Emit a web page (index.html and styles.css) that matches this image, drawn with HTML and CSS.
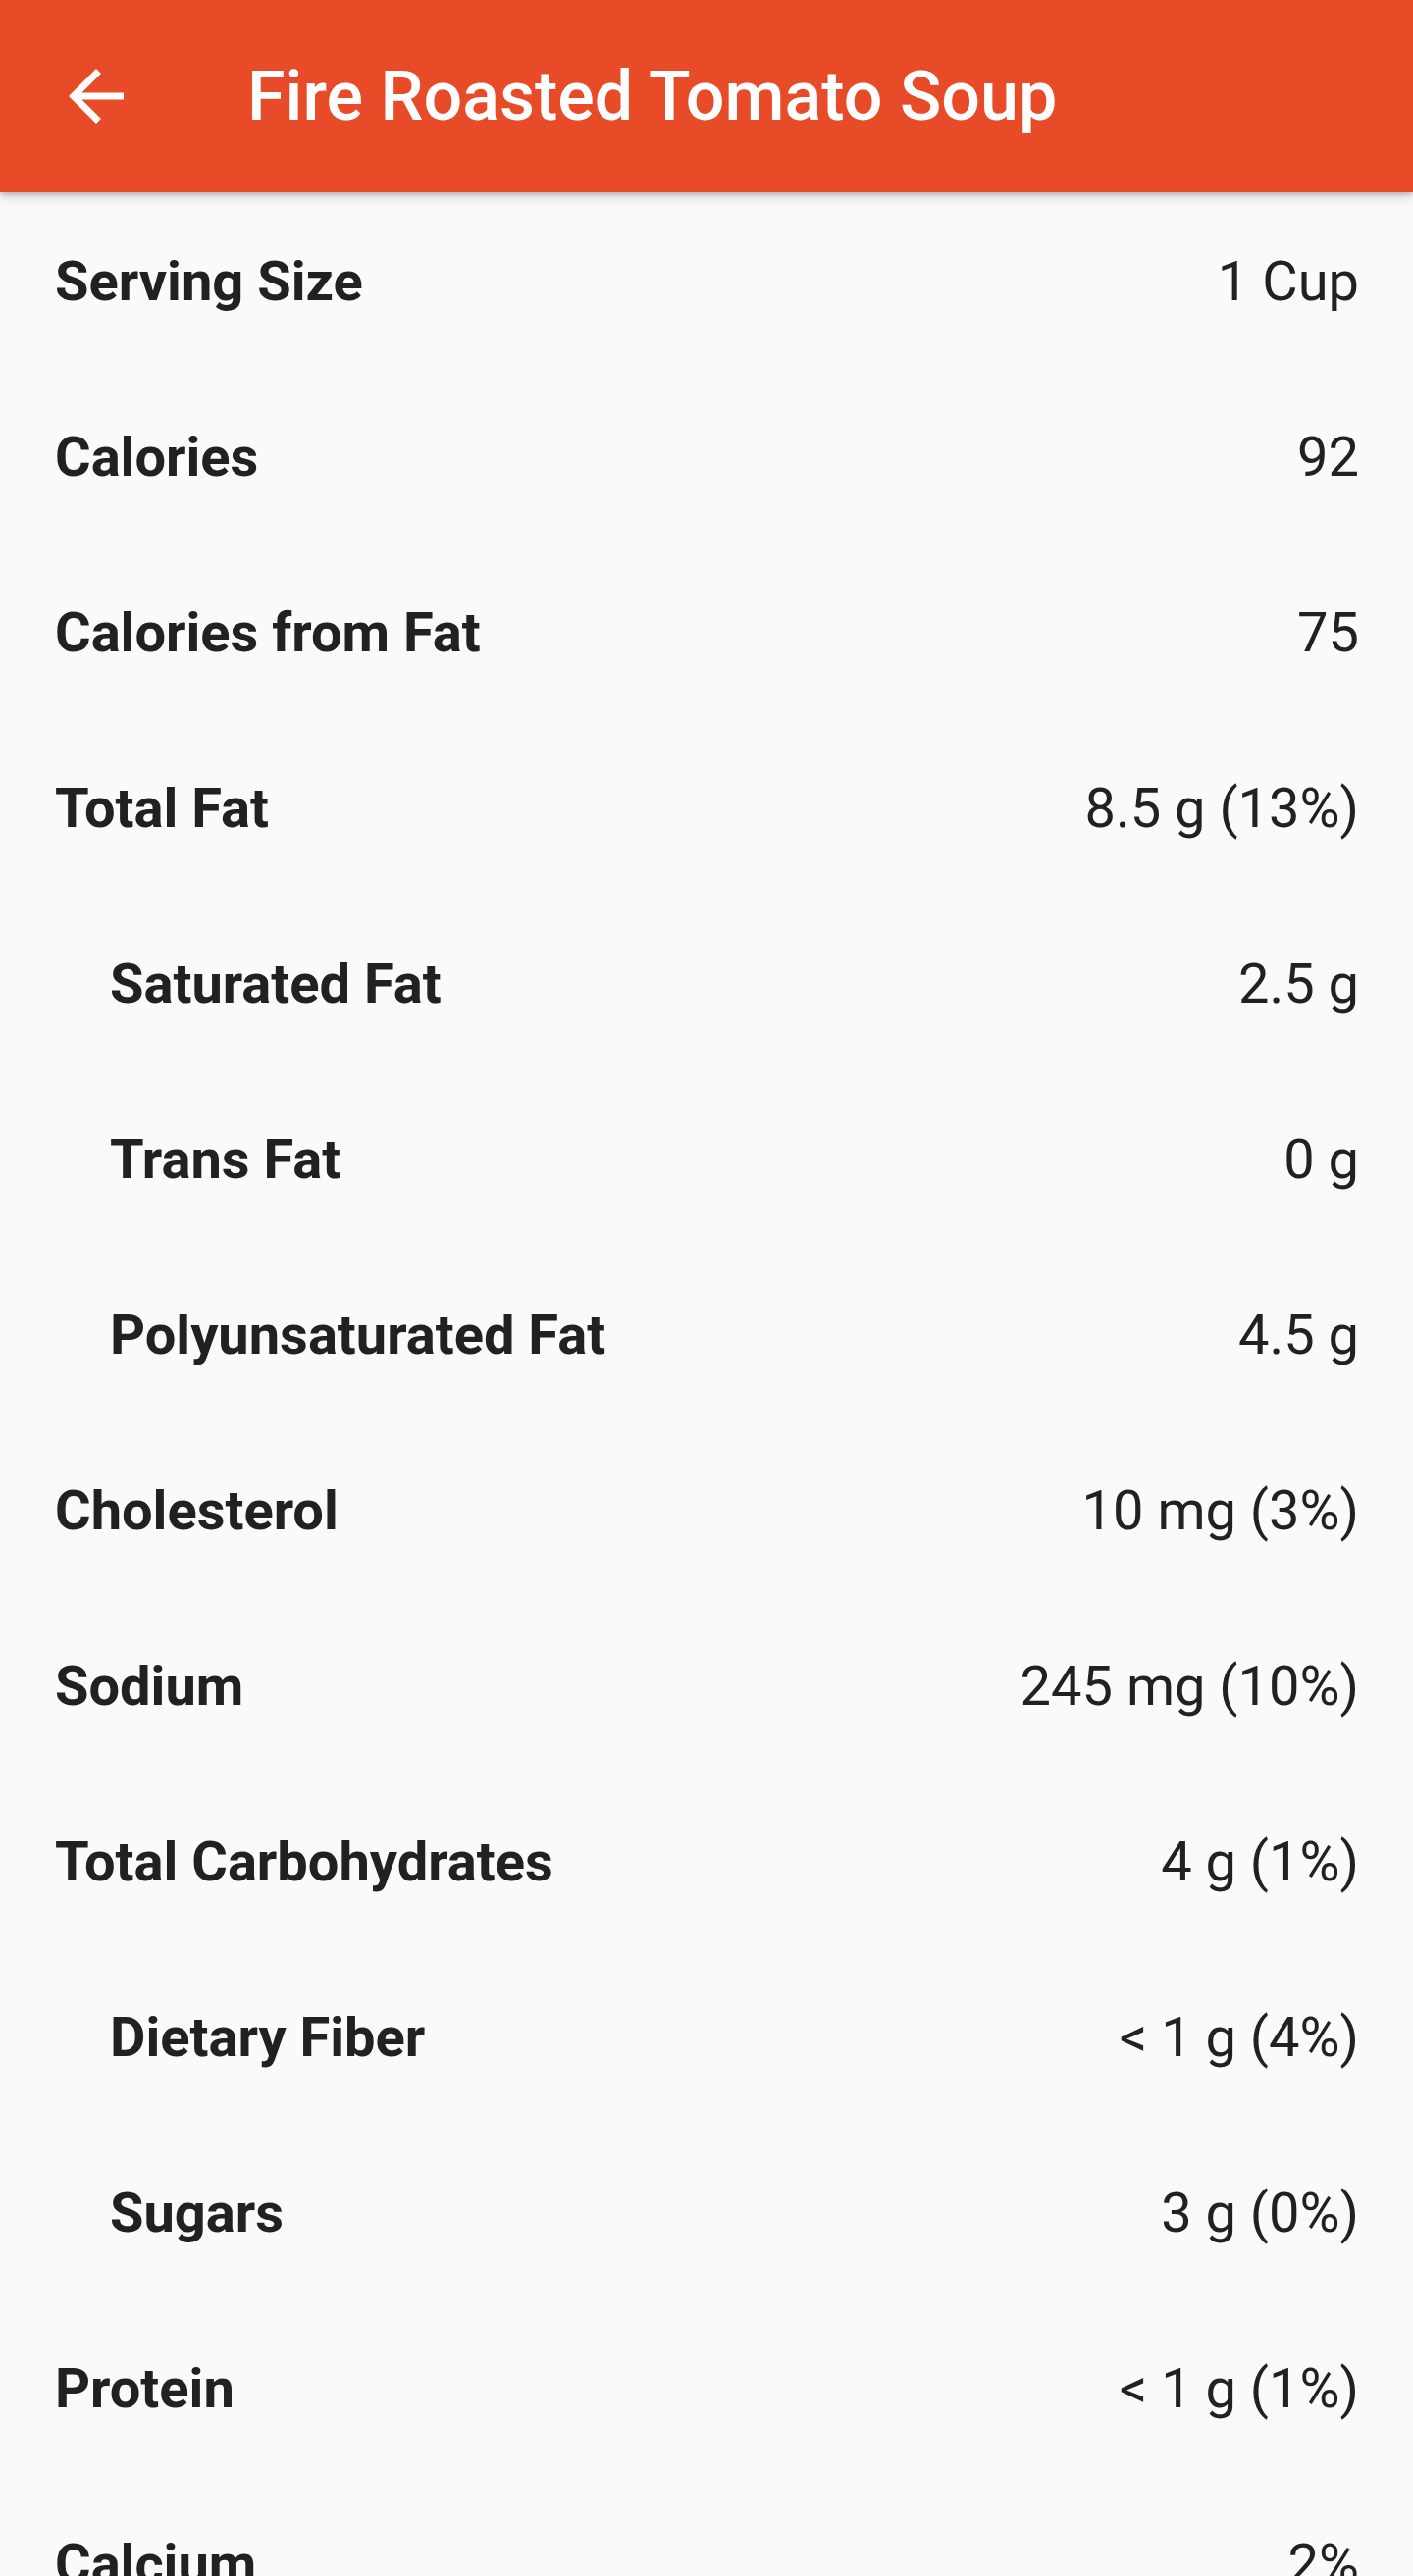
FILE: index.html
```html
<!DOCTYPE html>
<html lang="en">
<head>
    <meta charset="UTF-8">
    <meta name="viewport" content="width=device-width, initial-scale=1.0">
    <title>Fire Roasted Tomato Soup</title>
    <link rel="stylesheet" href="styles.css">
</head>
<body>
    <header class="app-bar">
        <button class="back-button" aria-label="Back">
            <svg viewBox="0 0 24 24" width="84" height="84">
                <path fill="#fff" d="M20 11H7.83l5.59-5.59L12 4l-8 8 8 8 1.41-1.41L7.83 13H20v-2z"/>
            </svg>
        </button>
        <h1 class="title">Fire Roasted Tomato Soup</h1>
    </header>

    <ul class="facts">
        <li class="fact"><span class="label">Serving Size</span><span class="value">1 Cup</span></li>
        <li class="fact"><span class="label">Calories</span><span class="value">92</span></li>
        <li class="fact"><span class="label">Calories from Fat</span><span class="value">75</span></li>
        <li class="fact"><span class="label">Total Fat</span><span class="value">8.5 g (13%)</span></li>
        <li class="fact sub"><span class="label">Saturated Fat</span><span class="value">2.5 g</span></li>
        <li class="fact sub"><span class="label">Trans Fat</span><span class="value">0 g</span></li>
        <li class="fact sub"><span class="label">Polyunsaturated Fat</span><span class="value">4.5 g</span></li>
        <li class="fact"><span class="label">Cholesterol</span><span class="value">10 mg (3%)</span></li>
        <li class="fact"><span class="label">Sodium</span><span class="value">245 mg (10%)</span></li>
        <li class="fact"><span class="label">Total Carbohydrates</span><span class="value">4 g (1%)</span></li>
        <li class="fact sub"><span class="label">Dietary Fiber</span><span class="value">&lt; 1 g (4%)</span></li>
        <li class="fact sub"><span class="label">Sugars</span><span class="value">3 g (0%)</span></li>
        <li class="fact"><span class="label">Protein</span><span class="value">&lt; 1 g (1%)</span></li>
        <li class="fact"><span class="label">Calcium</span><span class="value">2%</span></li>
    </ul>
</body>
</html>
```

FILE: styles.css
```css
body {
    font-family: Roboto, "Noto Sans", sans-serif;
    background-color: #fafafa;
    color: #212121;
    margin: 0;
    height: 2626px;
    overflow: hidden;
}

.app-bar {
    position: relative;
    z-index: 1;
    height: 196px;
    background-color: #e74b28;
    display: flex;
    align-items: center;
    padding-left: 56px;
    box-shadow: 0 3px 4px rgba(0, 0, 0, 0.16), 0 6px 12px rgba(0, 0, 0, 0.12);
}

.back-button {
    width: 84px;
    height: 84px;
    padding: 0;
    border: none;
    background: none;
    display: flex;
}

.title {
    margin: 0 0 0 112px;
    color: #fff;
    font-size: 70px;
    font-weight: 500;
    line-height: 1;
}

.facts {
    list-style: none;
    margin: 0;
    padding: 1px 0 0;
}

.fact {
    height: 179px;
    display: flex;
    align-items: center;
    justify-content: space-between;
    padding: 0 55px 0 56px;
    font-size: 56px;
}

.fact.sub {
    padding-left: 112px;
}

.label {
    font-weight: 700;
}

.value {
    font-weight: 400;
}
```
